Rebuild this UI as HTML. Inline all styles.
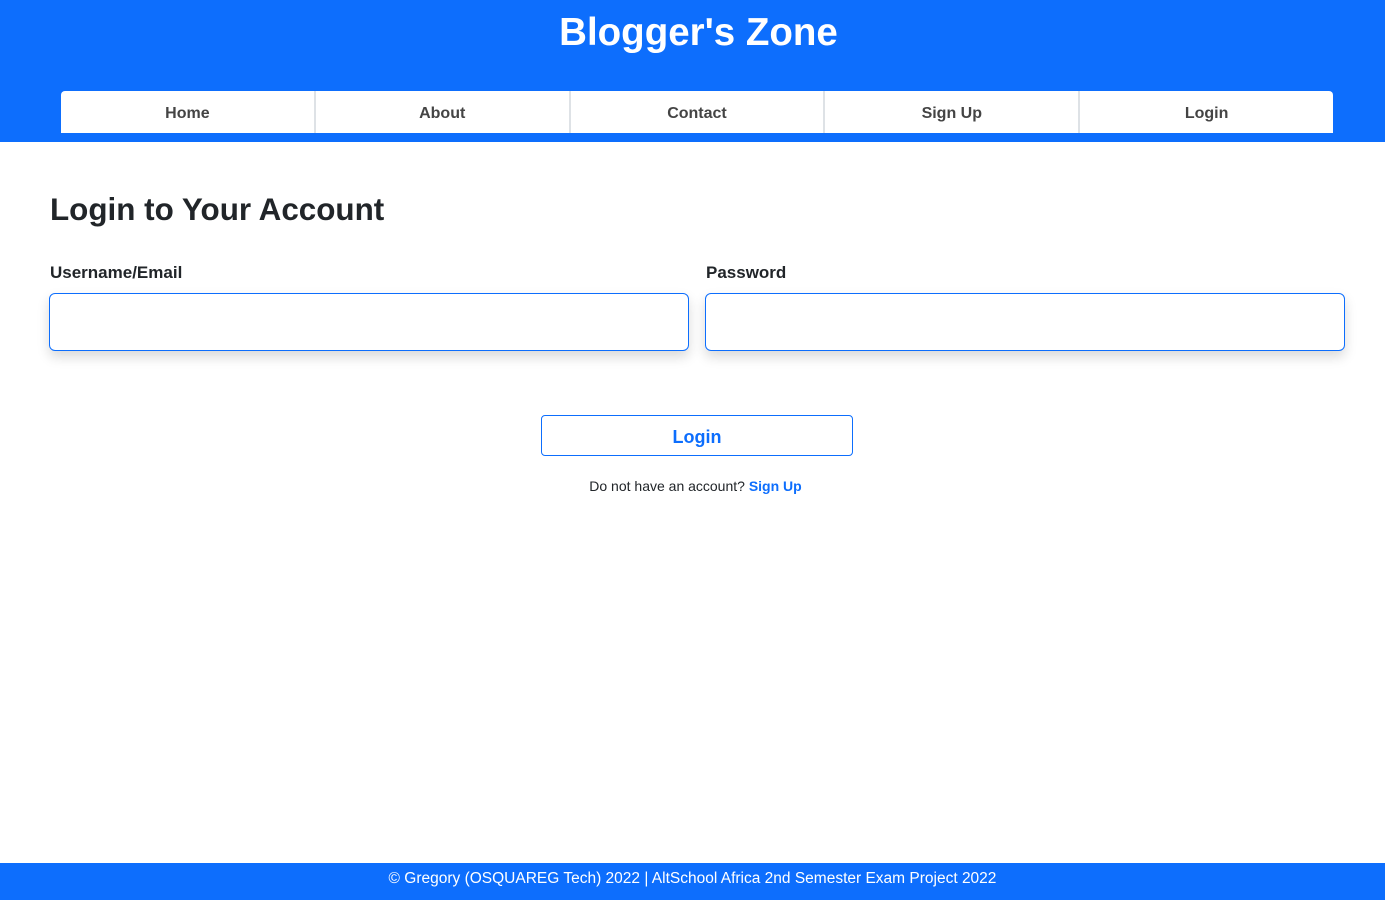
<!DOCTYPE html>
<html><head><meta charset="utf-8"><style>
*{box-sizing:border-box;margin:0;padding:0}
body{width:1385px;height:900px;font-family:"Liberation Sans",sans-serif;background:#fff;position:relative;overflow:hidden}
header{background:#0d6efd;height:142px;position:relative}
h1{color:#fff;text-align:center;font-size:38.5px;font-weight:bold;position:absolute;top:11px;width:100%;padding-left:12px}
nav{position:absolute;left:61px;top:91px;width:1272px;height:42px;display:flex;background:#fff;border-radius:4px 4px 0 0}
nav a{flex:1;text-align:center;line-height:46px;font-size:16px;font-weight:bold;color:#444;text-decoration:none;border-left:2px solid #dee2e6}
nav a:first-child{border-left:none}
h2{position:absolute;left:50px;top:192px;font-size:31.4px;color:#212529}
label{position:absolute;top:263px;font-size:17px;font-weight:bold;color:#212529}
.in{position:absolute;top:293px;height:58px;width:640px;border:1px solid #0d6efd;border-radius:6px;box-shadow:0 6px 12px rgba(0,0,0,.15)}
.btn{position:absolute;left:541px;top:415px;width:312px;height:41px;border:1px solid #0d6efd;border-radius:4px;color:#0d6efd;font-size:18px;font-weight:bold;text-align:center;line-height:42px}
.note{position:absolute;top:478px;width:100%;text-align:center;font-size:14px;color:#212529;padding-left:6px}
.note b{color:#0d6efd}
footer{position:absolute;top:863px;width:100%;height:37px;background:#0d6efd;color:#fff;text-align:center;font-size:15.5px;line-height:31px}
</style></head><body>
<header><h1>Blogger's Zone</h1>
<nav><a>Home</a><a>About</a><a>Contact</a><a>Sign Up</a><a>Login</a></nav></header>
<h2>Login to Your Account</h2>
<label style="left:50px">Username/Email</label>
<label style="left:706px">Password</label>
<div class="in" style="left:49px"></div>
<div class="in" style="left:705px"></div>
<div class="btn">Login</div>
<div class="note">Do not have an account? <b>Sign Up</b></div>
<footer>© Gregory (OSQUAREG Tech) 2022 | AltSchool Africa 2nd Semester Exam Project 2022</footer>
</body></html>
